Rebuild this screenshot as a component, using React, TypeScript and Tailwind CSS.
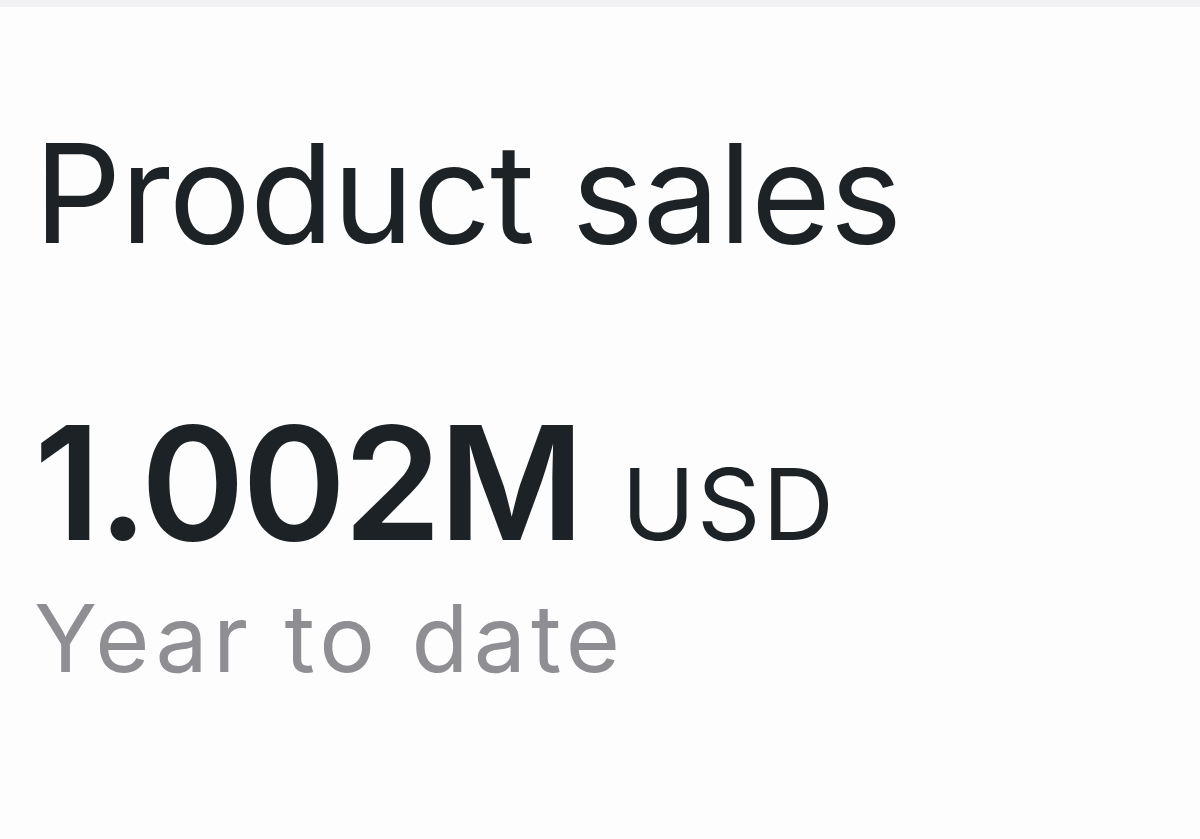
export default function App() {
  return (
    <div className="w-[1200px] h-[839px] bg-[#fdfdfd] overflow-hidden" style={{ fontFamily: 'Inter, "Noto Sans", sans-serif' }}>
      <div className="h-[7px] bg-[#f1f1f4]" />
      <div className="pl-[34px] pt-[118px]">
        <h2 className="text-[137px] leading-[1] font-normal text-[#1d2226] tracking-[-1px]">Product sales</h2>
        <div className="mt-[142px] flex items-baseline gap-[40px]">
          <span className="text-[158px] leading-[1] font-semibold text-[#1d2226] tracking-[-3px]">1.002M</span>
          <span className="text-[99px] leading-[1] font-normal text-[#1d2226] tracking-[2px]">USD</span>
        </div>
        <p className="mt-[30px] text-[93px] leading-[1] text-[#8e8e93] tracking-[5.2px]">Year to date</p>
      </div>
    </div>
  );
}
